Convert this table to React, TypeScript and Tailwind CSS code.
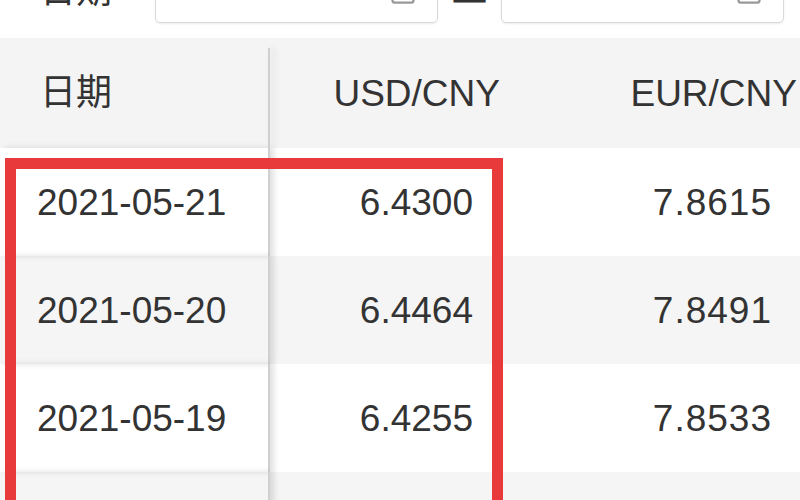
import { CalendarDays } from "lucide-react";

const rows = [
  { date: "2021-05-21", usd: "6.4300", eur: "7.8615" },
  { date: "2021-05-20", usd: "6.4464", eur: "7.8491" },
  { date: "2021-05-19", usd: "6.4255", eur: "7.8533" },
  { date: "2021-05-18", usd: "6.4280", eur: "7.8627" }
];

const font = { fontFamily: '"Liberation Sans", Arial, "Noto Sans CJK SC", sans-serif' };

export default function App() {
  return (
    <div className="relative h-[500px] w-[800px] overflow-hidden bg-white text-[#333]" style={font}>
      <FilterBar />
      <RateTable />
      {/* highlight box drawn over the first two columns */}
      <div className="pointer-events-none absolute left-[5px] top-[158px] h-[400px] w-[498px] border-[11px] border-[#e8393b]" />
    </div>
  );
}

function FilterBar() {
  return (
    <div className="h-[38px] overflow-hidden">
      <div className="-mt-[28px] flex h-[52px] items-center">
        <span className="w-[155px] pl-[40px] text-[36px] leading-none -translate-y-[7px]">日期</span>
        <DateInput />
        <span className="w-[63px] text-center text-[36px] leading-none -translate-y-[9px]">至</span>
        <DateInput />
      </div>
    </div>
  );
}

function DateInput() {
  return (
    <div className="flex h-[50px] w-[283px] items-center justify-between rounded-[5px] border border-[#d9d9d9] pl-[14px] pr-[20px] shadow-[0_1px_2px_rgba(0,0,0,0.08)]">
      <span className="text-[22px] text-[#cfcfcf] -translate-y-[7px]">2021-05-10</span>
      <CalendarDays className="h-[28px] w-[28px] -translate-y-[7px] text-[#999]" strokeWidth={2} />
    </div>
  );
}

function RateTable() {
  return (
    <div className="text-[37px] leading-none">
      <div className="flex h-[110px] items-center bg-[#f4f4f4]">
        <div className="relative flex h-full w-[270px] shrink-0 items-center pl-[40px]">
          <span className="text-[36px]">日期</span>
          <div className="absolute bottom-0 right-0 top-[10px] w-[2px] bg-[#d0d0d0] shadow-[4px_0_6px_rgba(0,0,0,0.12)]" />
        </div>
        <div className="w-[255px] shrink-0 pr-[25px] text-right">USD/CNY</div>
        <div className="w-[300px] shrink-0 pr-[28px] text-right">EUR/CNY</div>
      </div>
      {rows.map((row, i) => (
        <div
          key={row.date}
          className={`flex h-[108px] items-center ${i % 2 === 1 ? "bg-[#f5f5f5]" : "bg-white"}`}
        >
          <div className="flex h-full w-[270px] shrink-0 items-center border-r-2 border-[#d0d0d0] pl-[37px] shadow-[4px_0_6px_rgba(0,0,0,0.12)]">
            {row.date}
          </div>
          <div className="w-[255px] shrink-0 pr-[52px] text-right">{row.usd}</div>
          <div className="w-[300px] shrink-0 pr-[53px] text-right tracking-[1px]">{row.eur}</div>
        </div>
      ))}
    </div>
  );
}
